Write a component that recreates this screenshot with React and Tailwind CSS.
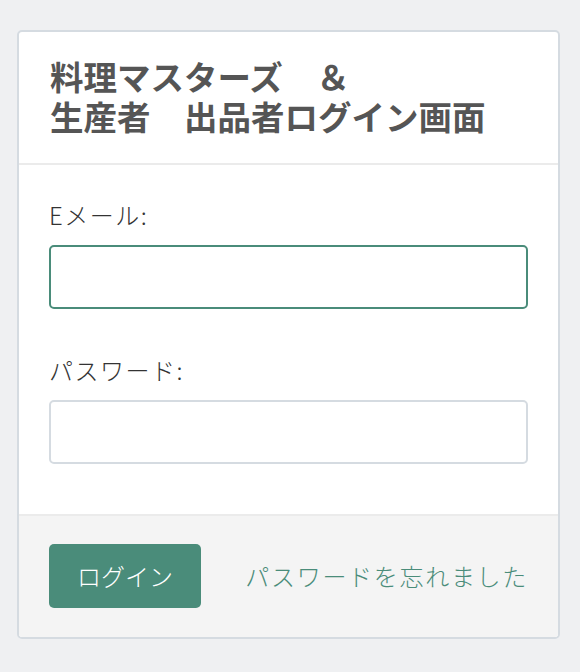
export default function App() {
  return (
    <div
      className="min-h-[672px] bg-[#eff0f2] pt-[30px] pl-[17px] pr-[20px] pb-[34px]"
      style={{ fontFamily: '"Noto Sans CJK JP", "Noto Sans", sans-serif' }}
    >
      <div className="rounded-[5px] border-2 border-[#d5dbe1] bg-white overflow-hidden">
        {/* Header */}
        <div className="border-b-2 border-[#ebebeb] px-[31px] pt-[24px] pb-[27px]">
          <h1 className="text-[33.5px] leading-[40px] font-bold text-[#555555]">
            料理マスターズ　＆
            <br />
            生産者　出品者ログイン画面
          </h1>
        </div>

        {/* Body */}
        <div className="px-[30px] pt-[34px] pb-[50px]">
          <label className="block text-[24px] leading-[32px] font-light tracking-[1.5px] text-[#333333] mb-[14px]">Eメール:</label>
          <input
            type="email"
            className="block w-full h-[64px] rounded-[5px] border-2 border-[#4a8c7a] bg-white px-3 outline-none"
          />

          <label className="block text-[24px] leading-[32px] font-light tracking-[1.5px] text-[#333333] mt-[45px] mb-[14px]">パスワード:</label>
          <input
            type="password"
            className="block w-full h-[64px] rounded-[5px] border-2 border-[#d5dbe1] bg-white px-3 outline-none"
          />
        </div>

        {/* Footer */}
        <div className="border-t-2 border-[#ebebeb] bg-[#f4f4f4] px-[30px] pt-[28px] pb-[29px] flex items-center justify-between">
          <button className="h-[64px] rounded-[5px] bg-[#4a8c7a] px-[28px] text-[24px] font-light text-white">
            ログイン
          </button>
          <a href="#" className="text-[24px] font-light tracking-[1.7px] text-[#4a8c7a]">パスワードを忘れました</a>
        </div>
      </div>
    </div>
  );
}
